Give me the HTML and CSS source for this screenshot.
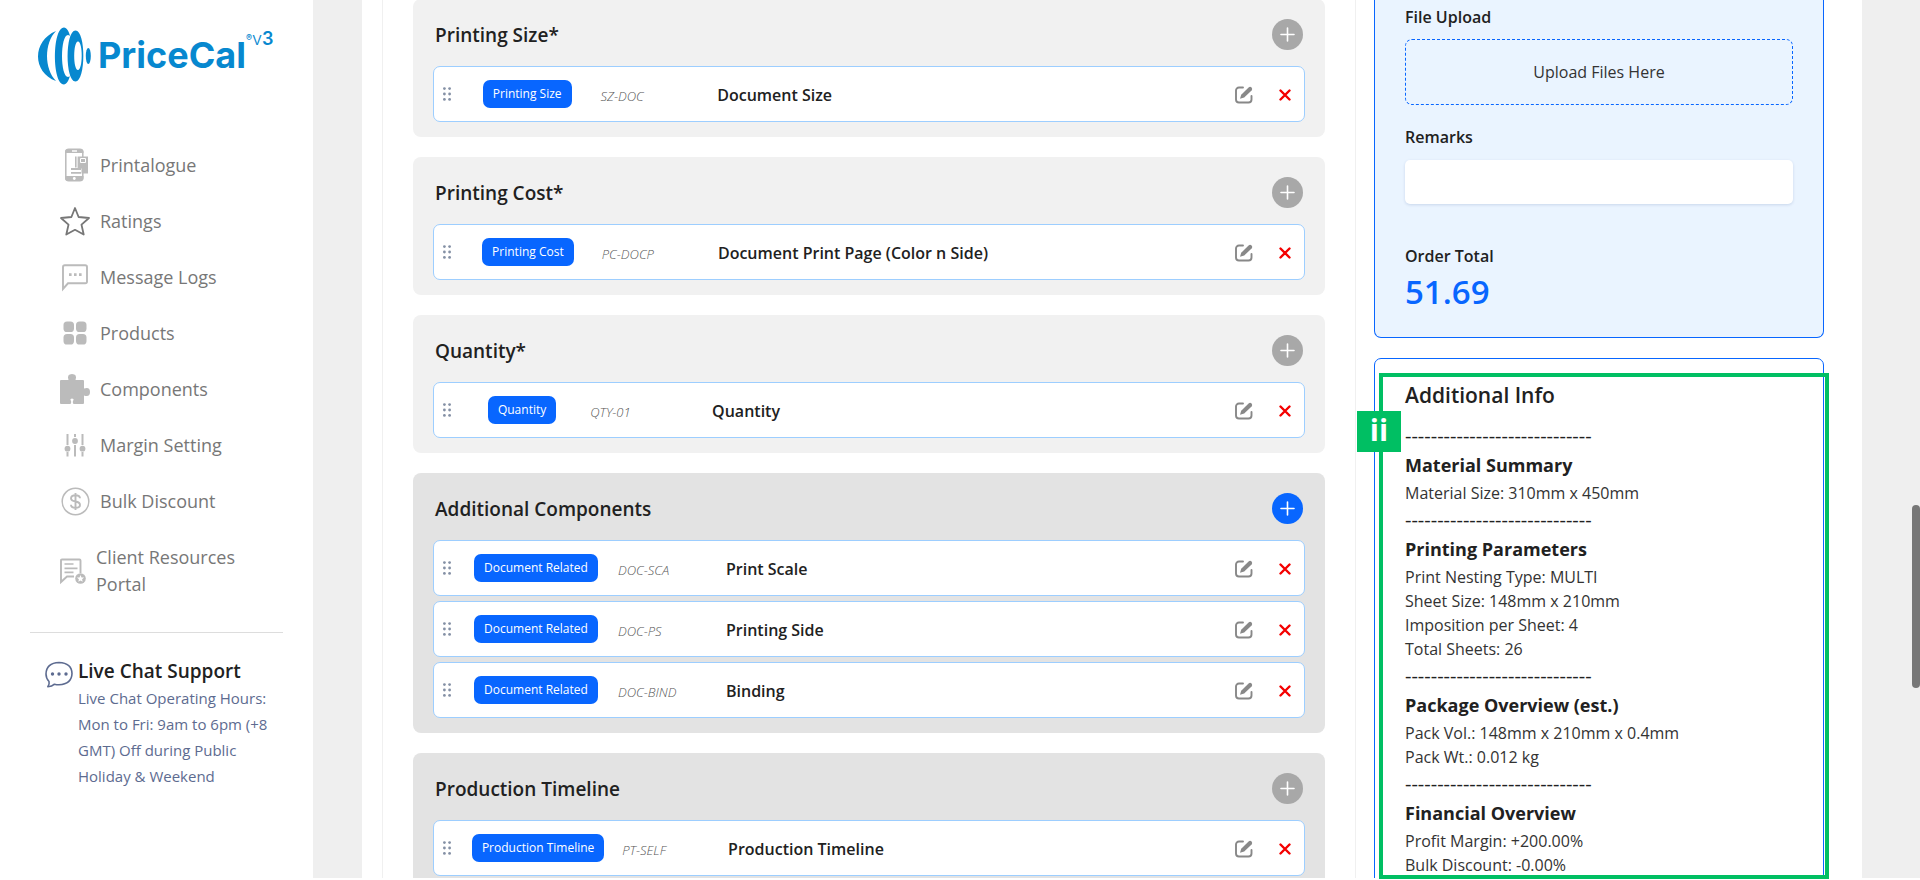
FILE: index.html
```html
<!DOCTYPE html>
<html lang="en">
<head>
  <meta charset="UTF-8">
  <title>PriceCal</title>
  <link rel="stylesheet" href="styles.css">
</head>
<body>
  <!-- Shared icons -->
  <svg class="sprite" aria-hidden="true">
    <symbol id="i-plus" viewBox="0 0 31 31">
      <path d="M15.500 9v13M9 15.500h13" fill="none" stroke="#fff" stroke-width="1.600" stroke-linecap="round"/>
    </symbol>
    <symbol id="i-grip" viewBox="0 0 8 14">
      <g fill="#8490a5"><circle cx="1.400" cy="1.600" r="1.400"/><circle cx="6.600" cy="1.600" r="1.400"/><circle cx="1.400" cy="7" r="1.400"/><circle cx="6.600" cy="7" r="1.400"/><circle cx="1.400" cy="12.400" r="1.400"/><circle cx="6.600" cy="12.400" r="1.400"/></g>
    </symbol>
    <symbol id="i-edit" viewBox="0 0 18 18">
      <path d="M8 1.500H4A3 3 0 0 0 1 4.500V13.500A3 3 0 0 0 4 16.500H13.500A3 3 0 0 0 16.500 13.500V10" fill="none" stroke="#888" stroke-width="1.900" stroke-linecap="round"/>
      <path d="M5 12.800 6.200 8.800 13.600 1.400Q15 .2 16.600 1.400 17.800 3 16.600 4.400L9.200 11.600Z" fill="#888"/>
    </symbol>
    <symbol id="i-cross" viewBox="0 0 12 12">
      <path d="M1.500 1.500 10.500 10.500M10.500 1.500 1.500 10.500" fill="none" stroke="#f40000" stroke-width="2.400" stroke-linecap="round"/>
    </symbol>
  </svg>

  <div class="page">
    <aside class="sidebar">
      <a class="logo" href="#">
        <svg width="54" height="58" viewBox="0 0 54 58">
          <g fill="#0788cf">
            <path d="M18 4C-6 14-6 45 18 54 6 42 6 16 18 4Z"/>
            <path fill-rule="evenodd" d="M26 .5C37 .5 37 57.500 26 57.500 14 57.500 14 .5 26 .5ZM30 8C22 8 22 50 30 50 38 50 38 8 30 8Z"/>
            <path fill-rule="evenodd" d="M37.500 3.500C48 3.500 48 54.500 37.500 54.500 27 54.500 27 3.500 37.500 3.500ZM40 14.500C35 14.500 35 43 40 43 45 43 45 14.500 40 14.500Z"/>
            <ellipse cx="50.300" cy="29" rx="2.500" ry="8"/>
          </g>
        </svg>
        <span class="logo-name">PriceCal</span>
        <span class="logo-mark">®</span>
        <span class="logo-version">v<b>3</b></span>
      </a>

      <nav class="nav">
        <a href="#">
          <svg width="30" height="34" viewBox="0 0 30 34">
            <rect x="5.800" y="1.300" width="17" height="31.400" rx="3" fill="none" stroke="#bbb" stroke-width="1.500"/>
            <path d="M5 5V4q0-3 3-3h12.500q3 0 3 3v1ZM5 28h18.500v2q0 3-3 3H8q-3 0-3-3Z" fill="#bbb"/>
            <path d="M12 3h5" stroke="#fff" stroke-width="1.400"/><circle cx="14.300" cy="30.500" r="1.400" fill="#fff"/>
            <path d="M18 17h3v9h-3z" fill="#fff"/>
            <path d="M15 8.500h1.600v11H15zM17.600 8.500H28v17h-6.500v-5h-3.900z" fill="#bbb"/><path d="M20.500 10.500h5v4h-5z" fill="none" stroke="#fff"/>
            <path d="M11 21h10M11 24.800h10" stroke="#bbb" stroke-width="1.800"/>
          </svg>
          Printalogue
        </a>
        <a href="#">
          <svg width="30" height="30" viewBox="0 0 30 30"><path d="M15 2 18.600 11 29 12 21.500 18.700 23.700 28.500 15 23.800 6.300 28.500 8.500 18.700 1 12 11.400 11Z" fill="none" stroke="#777" stroke-width="1.800" stroke-linejoin="round"/></svg>
          Ratings
        </a>
        <a href="#">
          <svg width="30" height="30" viewBox="0 0 30 30"><path d="M3 27V5q0-1.800 1.800-1.800h20.400q1.800 0 1.800 1.800v14.500q0 1.800-1.800 1.800H8Z" fill="none" stroke="#bbb" stroke-width="1.900"/><path d="M9 11.300h2.600v2.600H9zM14 11.300h2.600v2.600H14zM19 11.300h2.600v2.600H19z" fill="#bbb"/></svg>
          Message Logs
        </a>
        <a href="#">
          <svg width="30" height="30" viewBox="0 0 30 30"><g fill="#bbb"><rect x="3.500" y="3.500" width="10.500" height="10.500" rx="3.600"/><rect x="16" y="3.500" width="10.500" height="10.500" rx="3.600"/><rect x="3.500" y="16" width="10.500" height="10.500" rx="3.600"/><rect x="16" y="16" width="10.500" height="10.500" rx="3.600"/></g></svg>
          Products
        </a>
        <a href="#">
          <svg width="30" height="30" viewBox="0 0 30 30"><path d="M1 6h7.500Q6.500 0 12 0t3.500 6H23q1 0 1 1v7.500Q30 12.500 30 18t-6 3.500V29q0 1-1 1h-9.500q-1-1-.6-3 1.100-.8.500-2-1.400-1.200-2.800 0-.6 1.200.5 2 .4 2-.6 3H1q-1 0-1-1V7q0-1 1-1Z" fill="#bbb"/></svg>
          Components
        </a>
        <a href="#">
          <svg width="30" height="30" viewBox="0 0 30 30"><path d="M7.500 4v11M7.500 22v4.500M15 4v3M15 15v11.500M22.500 4v11M22.500 22v4.500" stroke="#bbb" stroke-width="2"/><g fill="#bbb"><circle cx="7.500" cy="18.700" r="2.900"/><circle cx="15" cy="11" r="2.900"/><circle cx="22.500" cy="18.700" r="2.900"/></g></svg>
          Margin Setting
        </a>
        <a href="#">
          <svg width="30" height="30" viewBox="0 0 30 30"><circle cx="15.500" cy="15.500" r="13.300" fill="none" stroke="#bbb" stroke-width="1.500"/><path d="M15.500 7v17M20 12.300Q19.800 9.300 15.500 9.300T11 12.300Q11 14.800 15.500 15.500T20 19Q20 21.800 15.500 21.800T11 18.800" fill="none" stroke="#bbb" stroke-width="1.900"/></svg>
          Bulk Discount
        </a>
        <a href="#" class="nav-tall">
          <svg width="26" height="30" viewBox="0 0 26 30"><path d="M20.500 17V4.500q0-1-1-1H2q-1 0-1 1V26L7 20.500H14" fill="none" stroke="#bbb" stroke-width="1.900"/><path d="M4.500 8h9M4.500 12.300h13M4.500 16.300h9" stroke="#bbb" stroke-width="1.700"/><circle cx="20.500" cy="22.500" r="5.300" fill="#bbb"/><path d="m20.500 19 1 2.400 2.600.2-2 1.700.6 2.500-2.200-1.400-2.200 1.400.6-2.500-2-1.700 2.600-.2Z" fill="#fff"/></svg>
          Client Resources Portal
        </a>
      </nav>

      <div class="support">
        <svg width="28" height="28" viewBox="0 0 28 28"><path d="M4 20.500Q1 17.500 1 13 1.300 2 14 1.500 26.700 2 27 12.500 26.700 23 14 23.800 11.500 23.800 9.500 23.200 7 25.500 2.800 25.800 4.800 23.500 4 20.500Z" fill="none" stroke="#5d6b90" stroke-width="1.600" stroke-linejoin="round"/><g fill="#5d6b90"><circle cx="7.500" cy="13" r="1.700"/><circle cx="14" cy="13" r="1.700"/><circle cx="21" cy="13" r="1.700"/></g></svg>
        <div>
          <h2>Live Chat Support</h2>
          <p>Live Chat Operating Hours: Mon to Fri: 9am to 6pm (+8 GMT) Off during Public Holiday &amp; Weekend</p>
        </div>
      </div>
    </aside>

    <main class="main">
      <div class="content">
        <div class="builder">
          <section class="group">
            <header><h2>Printing Size*</h2><button class="add" aria-label="Add"><svg><use href="#i-plus"/></svg></button></header>
            <div class="item">
              <svg class="grip"><use href="#i-grip"/></svg>
              <div class="type"><span class="badge">Printing Size</span></div>
              <div class="code">SZ-DOC</div>
              <div class="name">Document Size</div>
              <button class="edit" aria-label="Edit"><svg><use href="#i-edit"/></svg></button>
              <button class="remove" aria-label="Remove"><svg><use href="#i-cross"/></svg></button>
            </div>
          </section>

          <section class="group">
            <header><h2>Printing Cost*</h2><button class="add" aria-label="Add"><svg><use href="#i-plus"/></svg></button></header>
            <div class="item">
              <svg class="grip"><use href="#i-grip"/></svg>
              <div class="type"><span class="badge">Printing Cost</span></div>
              <div class="code">PC-DOCP</div>
              <div class="name">Document Print Page (Color n Side)</div>
              <button class="edit" aria-label="Edit"><svg><use href="#i-edit"/></svg></button>
              <button class="remove" aria-label="Remove"><svg><use href="#i-cross"/></svg></button>
            </div>
          </section>

          <section class="group">
            <header><h2>Quantity*</h2><button class="add" aria-label="Add"><svg><use href="#i-plus"/></svg></button></header>
            <div class="item">
              <svg class="grip"><use href="#i-grip"/></svg>
              <div class="type"><span class="badge">Quantity</span></div>
              <div class="code">QTY-01</div>
              <div class="name">Quantity</div>
              <button class="edit" aria-label="Edit"><svg><use href="#i-edit"/></svg></button>
              <button class="remove" aria-label="Remove"><svg><use href="#i-cross"/></svg></button>
            </div>
          </section>

          <section class="group dark">
            <header><h2>Additional Components</h2><button class="add active" aria-label="Add"><svg><use href="#i-plus"/></svg></button></header>
            <div class="item">
              <svg class="grip"><use href="#i-grip"/></svg>
              <div class="type"><span class="badge">Document Related</span></div>
              <div class="code">DOC-SCA</div>
              <div class="name">Print Scale</div>
              <button class="edit" aria-label="Edit"><svg><use href="#i-edit"/></svg></button>
              <button class="remove" aria-label="Remove"><svg><use href="#i-cross"/></svg></button>
            </div>
            <div class="item">
              <svg class="grip"><use href="#i-grip"/></svg>
              <div class="type"><span class="badge">Document Related</span></div>
              <div class="code">DOC-PS</div>
              <div class="name">Printing Side</div>
              <button class="edit" aria-label="Edit"><svg><use href="#i-edit"/></svg></button>
              <button class="remove" aria-label="Remove"><svg><use href="#i-cross"/></svg></button>
            </div>
            <div class="item">
              <svg class="grip"><use href="#i-grip"/></svg>
              <div class="type"><span class="badge">Document Related</span></div>
              <div class="code">DOC-BIND</div>
              <div class="name">Binding</div>
              <button class="edit" aria-label="Edit"><svg><use href="#i-edit"/></svg></button>
              <button class="remove" aria-label="Remove"><svg><use href="#i-cross"/></svg></button>
            </div>
          </section>

          <section class="group dark">
            <header><h2>Production Timeline</h2><button class="add" aria-label="Add"><svg><use href="#i-plus"/></svg></button></header>
            <div class="item">
              <svg class="grip"><use href="#i-grip"/></svg>
              <div class="type"><span class="badge">Production Timeline</span></div>
              <div class="code">PT-SELF</div>
              <div class="name">Production Timeline</div>
              <button class="edit" aria-label="Edit"><svg><use href="#i-edit"/></svg></button>
              <button class="remove" aria-label="Remove"><svg><use href="#i-cross"/></svg></button>
            </div>
          </section>
        </div>

        <div class="summary">
          <form class="card order">
            <h3>File Upload</h3>
            <button type="button" class="upload">Upload Files Here</button>
            <label for="remarks">Remarks</label>
            <input type="text" id="remarks" name="remarks">
            <h3>Order Total</h3>
            <output class="total">51.69</output>
          </form>

          <section class="card info">
            <h2>Additional Info</h2>
            <div class="rule">-----------------------------</div>
            <h3>Material Summary</h3>
            <p>Material Size: 310mm x 450mm</p>
            <div class="rule">-----------------------------</div>
            <h3>Printing Parameters</h3>
            <p>Print Nesting Type: MULTI<br>Sheet Size: 148mm x 210mm<br>Imposition per Sheet: 4<br>Total Sheets: 26</p>
            <div class="rule">-----------------------------</div>
            <h3>Package Overview (est.)</h3>
            <p>Pack Vol.: 148mm x 210mm x 0.4mm<br>Pack Wt.: 0.012 kg</p>
            <div class="rule">-----------------------------</div>
            <h3>Financial Overview</h3>
            <p>Profit Margin: +200.00%<br>Bulk Discount: -0.00%</p>
          </section>
        </div>
      </div>
    </main>
  </div>

  <!-- Callout over the Additional Info card -->
  <div class="callout"><span>ii</span></div>
  <div class="scroll-thumb"></div>
</body>
</html>
```
FILE: styles.css
```css
* {
  box-sizing: border-box;
}
body {
  margin: 0;
  overflow: hidden;
  background: #fff;
  color: #212121;
  font-family: "Open Sans", "Noto Sans", sans-serif;
  font-size: 16px;
}
h2, h3, p {
  margin: 0;
}
button {
  padding: 0;
  border: 0;
  background: none;
  font: inherit;
  color: inherit;
  cursor: pointer;
}
svg {
  display: block;
  flex: none;
}
.sprite {
  position: absolute;
  width: 0;
  height: 0;
}
.page {
  display: flex;
  height: calc(100vh - 2px);
  overflow: hidden;
}

/* Sidebar */
.sidebar {
  flex: none;
  width: 313px;
  padding: 27px 30px 0;
  background: #fff;
}
.logo {
  display: flex;
  height: 58px;
  padding-left: 8px;
  color: #0788cf;
  font-family: Inter, sans-serif;
  text-decoration: none;
}
.logo-name {
  margin-left: 6px;
  font-size: 36px;
  font-weight: 700;
  line-height: 56px;
}
.logo-mark {
  font-size: 9px;
  font-weight: 600;
  line-height: 22px;
}
.logo-version {
  font-size: 18px;
  font-weight: 300;
  line-height: 24px;
}
.logo-version b {
  font-weight: 600;
}
.nav {
  margin-top: 52px;
  padding: 0 0 20px 30px;
  border-bottom: 1px solid #ddd;
}
.nav a {
  display: flex;
  align-items: center;
  gap: 10px;
  height: 56px;
  color: #777;
  font-size: 18px;
  line-height: 27px;
  text-decoration: none;
}
.nav .nav-tall {
  height: 83px;
}
.support {
  display: flex;
  gap: 5px;
  padding: 24px 0 0 15px;
}
.support svg {
  margin-top: 4px;
}
.support h2 {
  font-size: 19px;
  font-weight: 600;
  line-height: 28px;
}
.support p {
  color: #5d6b90;
  font-size: 15px;
  line-height: 26px;
}

/* Main area */
.main {
  flex: 1;
  min-width: 0;
  padding: 0 58px 0 49px;
  background: #efefef;
}
.content {
  display: flex;
  gap: 18px;
  margin-top: -8px;
  padding: 0 38px 0 20px;
  background: #fff;
}
.builder {
  flex: 1;
  min-width: 0;
  padding: 7px 30px 20px;
  border: 1px solid #f0f0f0;
  border-width: 0 1px;
}
.group {
  margin-bottom: 20px;
  padding: 20px 20px 15px;
  border-radius: 8px;
  background: #f1f1f1;
}
.group.dark {
  background: #e3e3e3;
}
.group header {
  display: flex;
  align-items: center;
  justify-content: space-between;
  margin-bottom: 16px;
  padding: 0 2px;
}
.group h2 {
  padding-top: 2px;
  font-size: 19px;
  font-weight: 600;
  line-height: 29px;
}
.add {
  width: 31px;
  height: 31px;
  border-radius: 50%;
  background: #a8a8a8;
}
.add svg {
  width: 31px;
  height: 31px;
}
.add.active {
  background: #0866ff;
}
.item {
  display: flex;
  align-items: center;
  height: 56px;
  padding: 0 13px 0 9px;
  border: 1px solid #9dceff;
  border-radius: 7px;
  background: #fff;
}
.item + .item {
  margin-top: 5px;
}
.grip {
  width: 8px;
  height: 14px;
  margin-right: 3px;
}
.type {
  flex: 2 0 auto;
  text-align: center;
}
.badge {
  display: inline-block;
  padding: 0 10px;
  border-radius: 7px;
  background: #0866ff;
  color: #fff;
  font-size: 12px;
  line-height: 28px;
}
.code {
  flex: 1 0 88px;
  padding-top: 3px;
  color: #555;
  font-size: 13px;
  font-style: italic;
  font-weight: 300;
}
.name {
  flex: 1 0 485px;
  padding-top: 2px;
  font-weight: 600;
}
.edit,
.remove {
  padding-top: 2px;
}
.edit {
  margin: 0 26px 0 4px;
}
.edit svg {
  width: 18px;
  height: 18px;
}
.remove svg {
  width: 12px;
  height: 12px;
}

/* Order summary */
.summary {
  flex: none;
  width: 450px;
}
.card {
  padding: 0 30px;
  border: 1px solid #0866ff;
  border-radius: 7px;
}
.order {
  display: flex;
  flex-direction: column;
  margin-bottom: 20px;
  padding-top: 12px;
  padding-bottom: 22px;
  border-top: 0;
  border-radius: 0 0 7px 7px;
  background: #eaf4ff;
}
.order h3,
.order label {
  font-size: 16px;
  font-weight: 600;
  line-height: 26px;
}
.upload {
  height: 66px;
  margin: 9px 0 19px;
  border: 1px dashed #0866ff;
  border-radius: 7px;
  color: #333;
}
.order input {
  height: 44px;
  margin: 10px 0 39px;
  padding: 0 12px;
  border: 0;
  border-radius: 5px;
  background: #fff;
  box-shadow: 0 1px 3px rgba(0, 50, 120, 0.15);
  font: inherit;
}
.total {
  color: #0866ff;
  font-size: 33px;
  font-weight: 600;
  line-height: 46px;
}
.info {
  padding-top: 20px;
  padding-bottom: 20px;
}
.info h2 {
  margin-bottom: 13px;
  font-size: 21px;
  font-weight: 600;
  line-height: 32px;
}
.info .rule {
  margin-bottom: 3px;
  font-size: 20px;
  line-height: 24px;
}
.info h3 {
  margin-bottom: 2px;
  font-size: 18px;
  font-weight: 700;
  line-height: 28px;
}
.info p {
  margin-bottom: 3px;
  color: #333;
  line-height: 24px;
}

/* Overlays */
.callout {
  position: absolute;
  top: 373px;
  right: 91px;
  bottom: 1px;
  width: 450px;
  border: 4px solid #00bf63;
}
.callout span {
  position: absolute;
  top: 34px;
  left: -26px;
  width: 44px;
  padding-bottom: 3px;
  background: #00bf63;
  color: #fff;
  font-size: 30px;
  font-weight: 700;
  line-height: 38px;
  text-align: center;
}
.scroll-thumb {
  position: absolute;
  top: 505px;
  right: 0;
  width: 8px;
  height: 183px;
  border-radius: 4px;
  background: #777;
}
```
